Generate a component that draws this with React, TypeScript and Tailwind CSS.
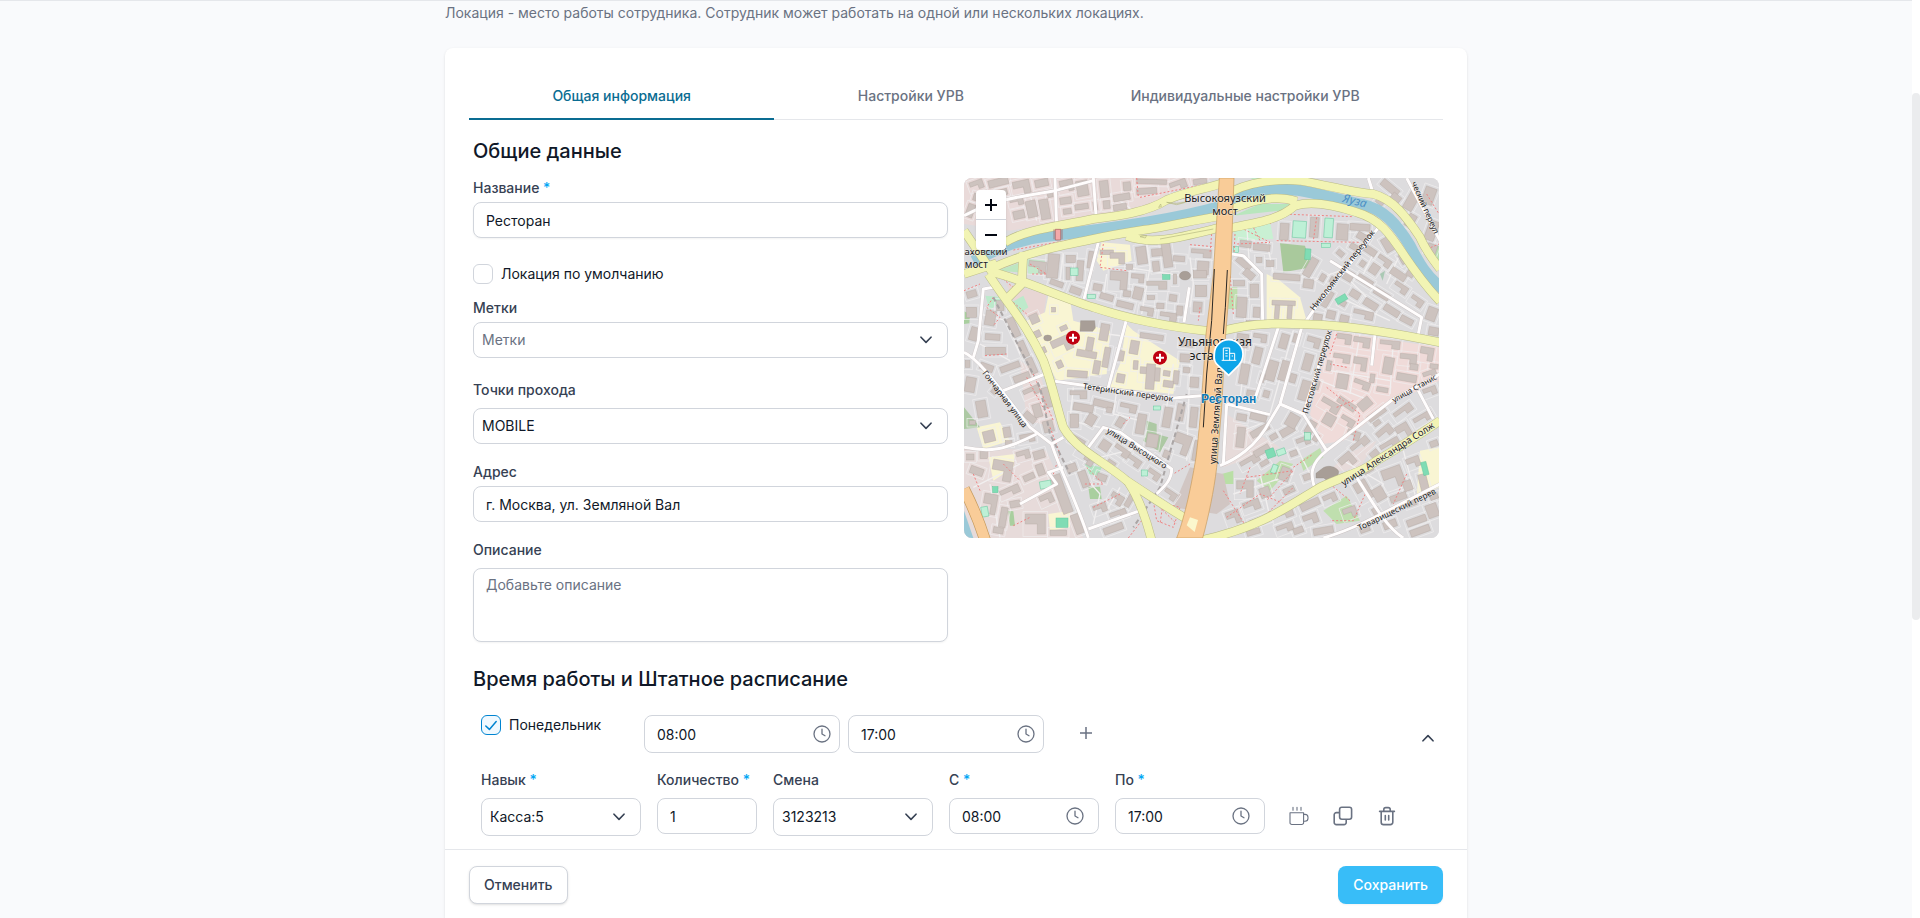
import React, { useState } from "react";
import clsx from "clsx";

const TABS = ["Общая информация", "Настройки УРВ", "Индивидуальные настройки УРВ"];

const FIELD =
  "block w-full rounded-lg border border-gray-300 bg-white text-sm placeholder:text-gray-500 outline-none focus:border-sky-500";

interface IconProps {
  className?: string;
}

function ChevronIcon({ className }: IconProps) {
  return (
    <svg viewBox="0 0 12 8" className={className} fill="none" stroke="currentColor" strokeWidth="1.6" strokeLinecap="round" strokeLinejoin="round">
      <path d="M1 1.2 6 6.4 11 1.2" />
    </svg>
  );
}

function ClockIcon({ className }: IconProps) {
  return (
    <svg viewBox="0 0 18 18" className={className} fill="none" stroke="currentColor" strokeWidth="1.3" strokeLinecap="round" strokeLinejoin="round">
      <circle cx="9" cy="9" r="8" />
      <path d="M9 4.2V9l3 1.7" />
    </svg>
  );
}

function MugIcon({ className }: IconProps) {
  return (
    <svg viewBox="0 0 20 20" className={className} fill="none" stroke="currentColor" strokeWidth="1.1" strokeLinecap="round" strokeLinejoin="round">
      <path d="M1 6.8h13.6v9.9a1.8 1.8 0 0 1-1.8 1.8h-10A1.8 1.8 0 0 1 1 16.700z" />
      <path d="M14.600 8.400h1.400a3 3 0 0 1 3 3v.8a3 3 0 0 1-3 3h-1.400" />
      <path d="M4 1.300v3M8 1.300v3M12 1.300v3" />
    </svg>
  );
}

function CopyIcon({ className }: IconProps) {
  return (
    <svg viewBox="0 0 20 20" className={className} fill="none" stroke="currentColor" strokeWidth="1.6" strokeLinejoin="round">
      <rect x="6.600" y="1.200" width="12" height="12" rx="2.200" />
      <path d="M6.600 6.600H3.400a2.200 2.200 0 0 0-2.200 2.200v7.600a2.200 2.200 0 0 0 2.200 2.200h7.600a2.200 2.200 0 0 0 2.200-2.200V13.200" />
    </svg>
  );
}

function TrashIcon({ className }: IconProps) {
  return (
    <svg viewBox="0 0 20 20" className={className} fill="none" stroke="currentColor" strokeWidth="1.6" strokeLinecap="round" strokeLinejoin="round">
      <path d="M2.600 5.400h14.800M4.200 5.400v10.800a2.400 2.400 0 0 0 2.400 2.400h6.800a2.400 2.400 0 0 0 2.400-2.400V5.400" />
      <path d="M6.800 5.200V3.600a2 2 0 0 1 2-2h2.400a2 2 0 0 1 2 2v1.600M8.300 9.600v4.400M11.700 9.600v4.400" />
    </svg>
  );
}

interface LabelProps {
  htmlFor: string;
  text: string;
  required?: boolean;
}

function FieldLabel({ htmlFor, text, required }: LabelProps) {
  return (
    <label htmlFor={htmlFor} className="block text-sm font-medium text-gray-700">
      {text}
      {required && <span className="text-sky-500"> *</span>}
    </label>
  );
}

interface SelectProps {
  id: string;
  options: string[];
  muted?: boolean;
  className?: string;
}

function SelectField({ id, options, muted, className }: SelectProps) {
  return (
    <div className={clsx("relative", className)}>
      <select id={id} className={clsx(FIELD, "h-full appearance-none pl-2 pr-10", muted ? "text-gray-500" : "text-gray-900")}>
        {options.map((o) => (
          <option key={o}>{o}</option>
        ))}
      </select>
      <ChevronIcon className="pointer-events-none absolute right-4 top-1/2 h-2 w-3 -translate-y-1/2 text-gray-700" />
    </div>
  );
}

interface TimeProps {
  id: string;
  value: string;
  label?: string;
  className?: string;
  iconClass: string;
}

function TimeField({ id, value, label, className, iconClass }: TimeProps) {
  return (
    <div className={clsx("relative", className)}>
      <input id={id} aria-label={label} defaultValue={value} className={clsx(FIELD, "h-full pl-3 pr-10 text-gray-900")} />
      <ClockIcon className={clsx("pointer-events-none absolute top-1/2 size-[18px] -translate-y-1/2 text-gray-500", iconClass)} />
    </div>
  );
}

// x, y, width, height, rotation
const BUILDINGS: number[][] = [
  [30, 20, 40, 26, -20], [85, 14, 60, 22, -14], [160, 20, 50, 40, -12], [225, 16, 40, 22, -12], [300, 18, 40, 34, -12],
  [350, 20, 34, 46, -10], [200, 80, 30, 50, -12], [150, 70, 40, 24, -12], [160, 110, 34, 24, -12], [240, 76, 28, 60, -10],
  [300, 70, 34, 20, -8], [345, 90, 40, 16, -8], [310, 104, 24, 16, -8], [420, 20, 26, 50, -6], [430, 80, 20, 24, -6],
  [460, 60, 50, 20, -10], [530, 16, 90, 14, 2], [530, 42, 60, 18, -4], [630, 20, 50, 26, -20], [460, 90, 40, 18, -10],
  [20, 90, 22, 40, 20], [40, 60, 30, 22, 16], [262, 240, 34, 72, 6], [206, 262, 52, 34, 6], [420, 228, 40, 14, 0],
  [450, 236, 44, 34, 0], [318, 244, 28, 22, 0], [350, 260, 20, 60, 4], [530, 218, 30, 52, -8], [575, 224, 40, 22, -4],
  [608, 206, 26, 74, -8], [694, 226, 60, 24, 4], [712, 262, 34, 40, 4], [450, 292, 52, 54, 4], [514, 300, 38, 26, 4],
  [520, 340, 28, 36, 14], [560, 322, 60, 24, 0], [562, 365, 22, 12, 0], [628, 362, 22, 20, 8], [640, 300, 10, 30, 0],
  [700, 290, 40, 22, 0], [706, 334, 34, 34, 0], [700, 384, 26, 30, 4], [400, 330, 26, 20, 10], [420, 360, 40, 18, 16],
  [470, 384, 50, 18, 14], [540, 400, 40, 24, 10], [600, 416, 50, 24, 8], [270, 320, 40, 16, 20], [330, 340, 34, 20, 20],
  [210, 420, 26, 28, -24], [222, 470, 20, 20, -24], [276, 490, 60, 44, -24], [380, 490, 20, 40, 10], [275, 400, 12, 14, 0],
  [420, 450, 26, 50, 10], [430, 520, 18, 60, 10], [350, 530, 60, 20, 10], [322, 590, 60, 20, 4], [400, 560, 20, 40, 10],
  [510, 500, 26, 40, 10], [540, 580, 60, 40, 4], [558, 570, 26, 76, 4], [470, 600, 24, 26, 10], [640, 590, 16, 40, 6],
  [660, 500, 40, 18, 6], [540, 480, 70, 16, 8], [610, 620, 30, 20, 8], [660, 540, 30, 24, 4], [20, 350, 30, 20, -16],
  [76, 410, 30, 44, 10], [20, 400, 30, 30, 0], [110, 380, 22, 30, 0], [30, 460, 26, 40, 16], [76, 480, 44, 18, 4],
  [76, 520, 60, 22, 0], [150, 430, 22, 60, -24], [180, 500, 20, 50, -24], [205, 550, 20, 50, -24], [60, 570, 40, 20, 20],
  [16, 610, 30, 44, 10], [50, 680, 30, 50, -10], [120, 570, 60, 18, -20], [160, 600, 50, 20, -20], [190, 640, 50, 24, -24],
  [220, 690, 24, 40, -16], [250, 640, 24, 60, -14], [190, 720, 40, 20, 40], [70, 770, 34, 34, -14], [250, 740, 30, 34, -14],
  [96, 860, 60, 60, 10], [60, 830, 22, 24, 0], [180, 780, 44, 24, -10], [170, 830, 40, 26, -16], [220, 830, 34, 24, -16],
  [30, 880, 40, 22, 20], [120, 940, 60, 24, -24], [70, 960, 40, 60, 10], [196, 1020, 60, 60, 0], [120, 1000, 20, 60, 10],
  [150, 980, 30, 20, -10], [290, 900, 30, 120, -20], [240, 960, 40, 30, -24], [340, 1020, 24, 60, -20], [330, 790, 44, 24, 30],
  [350, 830, 46, 24, 30], [320, 870, 30, 24, -20], [360, 890, 24, 50, -20], [400, 990, 40, 26, -20], [410, 900, 30, 20, 20],
  [450, 960, 40, 30, 30], [330, 650, 50, 24, 0], [340, 690, 60, 22, 10], [330, 720, 26, 40, 0], [400, 680, 60, 20, 14],
  [380, 720, 26, 34, 30], [480, 690, 50, 24, 12], [470, 730, 22, 30, 30], [420, 800, 30, 30, 34], [460, 820, 50, 24, 34],
  [500, 850, 44, 24, 34], [560, 890, 40, 24, 34], [530, 720, 26, 60, 10], [610, 700, 24, 60, 10], [560, 780, 34, 40, 10],
  [650, 690, 22, 50, 10], [690, 700, 22, 60, 6], [640, 780, 50, 60, 20], [610, 950, 40, 24, 34],
  [450, 1010, 50, 24, -20], [430, 1054, 60, 20, -20], [840, 200, 34, 20, 8], [880, 210, 50, 20, 6], [826, 260, 50, 18, 40],
  [850, 290, 34, 22, 40], [870, 330, 26, 40, 0], [820, 320, 34, 16, 0], [830, 370, 30, 60, 4], [880, 400, 20, 30, 4],
  [960, 148, 26, 50, 4], [1050, 130, 26, 60, 4], [1130, 150, 34, 48, 4], [1170, 150, 60, 20, 4], [1190, 180, 40, 20, 30],
  [940, 300, 80, 18, 4], [1030, 316, 30, 26, 8], [936, 380, 70, 14, 2], [944, 394, 14, 40, 4], [982, 394, 14, 40, 4],
  [1060, 420, 26, 26, 10], [1100, 410, 26, 24, 14], [1140, 424, 26, 22, 14], [1090, 350, 22, 50, 30], [1040, 250, 24, 60, 30],
  [1150, 290, 30, 30, 30], [1190, 310, 50, 20, 32], [1240, 350, 50, 20, 32], [1170, 350, 30, 22, 32], [1210, 380, 44, 22, 32],
  [1270, 400, 50, 20, 32], [1320, 430, 40, 18, 28], [1180, 410, 60, 24, 12], [1210, 220, 40, 20, 34], [1250, 250, 44, 24, 34],
  [1230, 270, 26, 30, 34], [1290, 290, 50, 22, 34], [1300, 330, 44, 24, 34], [1350, 370, 40, 24, 34], [1270, 190, 26, 44, -30],
  [1400, 400, 30, 40, 20], [1406, 460, 30, 24, 10], [1260, 30, 60, 22, 40], [1290, 60, 30, 30, 40], [1340, 50, 30, 60, 30],
  [1340, 120, 24, 40, 30], [1390, 40, 34, 50, 20], [1400, 140, 30, 60, 20], [1250, 70, 24, 22, 40], [1400, 210, 30, 30, 20],
  [830, 480, 34, 40, 8], [880, 480, 40, 24, 8], [880, 520, 24, 50, 14], [840, 570, 26, 60, 10], [920, 560, 30, 60, 16],
  [960, 480, 24, 44, 16], [960, 560, 24, 60, 16], [1040, 490, 40, 30, 16], [1030, 540, 26, 50, 16], [1020, 620, 30, 60, 16],
  [1130, 480, 44, 30, 8], [1180, 490, 50, 30, 8], [1120, 540, 50, 26, 8], [1180, 550, 40, 40, 8], [1130, 600, 34, 44, 10],
  [1180, 620, 50, 24, 20], [1260, 500, 60, 24, 6], [1270, 550, 30, 50, 10], [1320, 540, 50, 30, 6], [1380, 520, 40, 40, 10],
  [1310, 600, 60, 22, 10], [1390, 590, 40, 24, -20], [1080, 680, 60, 30, 30], [1090, 720, 34, 34, 30], [1140, 730, 44, 24, 30],
  [1130, 680, 60, 20, 34], [1200, 670, 30, 40, 50], [1220, 710, 60, 20, -36], [1160, 770, 40, 26, 20], [830, 720, 30, 20, 10],
  [830, 760, 24, 60, 6], [870, 720, 50, 20, 14], [870, 760, 60, 20, -30], [840, 850, 60, 24, -30], [880, 820, 50, 20, -30],
  [960, 760, 44, 22, -30], [980, 720, 34, 40, 30], [1010, 790, 40, 24, -20], [1040, 740, 24, 40, 30], [830, 920, 50, 50, 0],
  [850, 980, 50, 30, -20], [800, 1010, 40, 40, -20], [870, 1030, 60, 20, -20], [900, 940, 30, 30, -20], [960, 880, 30, 40, 20],
  [1140, 840, 44, 40, -40], [1170, 800, 60, 24, -40], [1250, 760, 50, 30, -40], [1300, 700, 60, 24, -36], [1360, 720, 60, 24, -30],
  [1260, 800, 60, 24, -30], [1310, 750, 40, 40, -30], [1390, 640, 40, 24, -20], [1190, 920, 40, 60, -30], [1240, 940, 34, 40, -30],
  [1270, 880, 60, 60, -20], [1340, 850, 40, 30, -20], [1380, 900, 24, 60, -14], [1290, 960, 50, 20, -20], [1020, 980, 60, 22, -24],
  [1090, 960, 40, 26, -24], [940, 1010, 60, 24, -20], [950, 1050, 50, 24, -20], [1030, 1020, 44, 30, -20], [1060, 1060, 60, 20, -10],
  [1150, 1000, 40, 30, -20], [1270, 1040, 40, 22, -20], [1340, 1030, 60, 20, -20], [1350, 1060, 60, 20, -20], [1400, 990, 34, 40, -20],
  [112, 46, 30, 18, -14], [60, 104, 44, 18, -20], [262, 52, 16, 18, -12], [400, 84, 12, 24, -8], [490, 24, 22, 26, -6],
  [700, 14, 40, 16, -10], [660, 58, 40, 12, -10], [318, 280, 12, 36, 0], [384, 232, 14, 50, 8], [500, 272, 18, 14, 0],
  [578, 262, 20, 30, -6], [640, 246, 34, 16, 4], [650, 396, 18, 28, 4], [590, 388, 22, 16, 4], [490, 350, 22, 18, 8],
  [300, 455, 22, 14, -24], [240, 520, 18, 18, -24], [290, 560, 18, 22, -24], [470, 530, 22, 30, 10], [520, 560, 14, 26, 4],
  [610, 590, 20, 16, 8], [690, 610, 26, 30, 4], [670, 580, 20, 16, 6], [16, 560, 14, 20, 0], [96, 640, 16, 20, 40],
  [28, 740, 18, 12, 0], [130, 760, 22, 30, -10], [136, 800, 20, 14, 0], [230, 870, 22, 34, -20], [190, 900, 34, 18, -24],
  [20, 840, 22, 18, 0], [100, 1060, 30, 18, 10], [270, 1068, 50, 16, 0], [380, 860, 18, 16, 30], [500, 960, 16, 40, 30],
  [440, 860, 26, 18, 34], [440, 700, 16, 16, 10], [580, 850, 26, 16, 34], [610, 830, 20, 22, 20], [700, 800, 16, 60, 10],
  [860, 440, 30, 14, 0], [920, 260, 22, 18, 0], [890, 250, 16, 16, 0], [1080, 300, 16, 22, 30], [1110, 310, 18, 18, 30],
  [1140, 380, 18, 16, 30], [1130, 230, 22, 16, 40], [1170, 210, 22, 16, 30], [1200, 260, 16, 18, 34], [1340, 290, 22, 18, 34],
  [1320, 240, 16, 30, -30], [1420, 330, 16, 26, 0], [900, 600, 14, 24, 16], [860, 650, 34, 18, 10], [910, 650, 18, 20, 16],
  [1000, 480, 18, 26, 16], [990, 600, 18, 26, 16], [1060, 620, 18, 26, 16], [1100, 560, 14, 30, 10], [1230, 600, 14, 26, 8],
  [1250, 640, 34, 14, 10], [1350, 570, 24, 18, 8], [1410, 570, 24, 14, 8], [1060, 780, 16, 22, 30], [930, 780, 22, 16, -30],
  [900, 860, 26, 14, -30], [990, 830, 22, 16, -20], [1030, 900, 22, 18, -20], [970, 940, 34, 18, -24], [1000, 1060, 30, 18, -20],
  [860, 1066, 40, 16, -16], [1230, 830, 26, 18, -40], [1210, 880, 30, 16, -30], [1330, 920, 26, 30, -20], [1410, 800, 24, 18, -20],
  [1240, 1000, 20, 30, -30], [1200, 1060, 30, 14, -20], [1410, 960, 24, 16, -20], [1340, 980, 30, 16, -20], [1240, 740, 22, 14, -36],
];

// parks and yards: colour, points
const AREAS: string[][] = [
  ["#e9dad9", "12,12 760,12 620,60 560,110 400,130 150,170 12,150"],
  ["#e8d6d4", "140,330 260,360 250,430 200,430 160,380"],
  ["#f0dbd9", "1110,470 1437,520 1437,620 1290,690 1150,800 1090,810 1050,720"],
  ["#e8dad9", "180,560 240,600 290,760 200,740"],
  ["#e7dbda", "12,820 260,830 370,1092 12,1092"],
  ["#e7dbda", "800,720 860,760 960,820 790,880"],
  ["#e7dbda", "1100,900 1160,840 1250,800 1200,880"],
  ["#f9f5d3", "265,365 330,375 340,440 450,470 440,600 290,620 200,440 255,415"],
  ["#f9f5d3", "500,450 520,470 660,560 640,660 450,640 480,570"],
  ["#f9f5d3", "425,205 510,212 515,260 430,290 410,260"],
  ["#f9f5d3", "920,300 960,320 1020,370 1040,440 920,440"],
  ["#f9f5d3", "50,760 120,745 150,800 70,825"],
  ["#f9f5d3", "85,850 165,840 160,880 100,920"],
  ["#f9f5d3", "265,1020 330,1010 330,1060 270,1070"],
  ["#f9f5d3", "1380,830 1437,820 1437,940 1370,970"],
  ["#c9f0d3", "820,150 930,140 940,195 825,200"],
  ["#b8e6bd", "820,125 900,90 990,90 960,110"],
  ["#c0e8c4", "870,12 1010,12 1000,30 900,25"],
  ["#bdeacb", "76,365 130,370 90,410"],
  ["#bdeacb", "155,385 190,365 205,400 170,425"],
  ["#c5e9cc", "200,255 255,260 255,300 205,300"],
  ["#bfe6c0", "110,290 175,268 175,295"],
  ["#a9c99c", "960,208 1035,215 1055,280 970,295"],
  ["#adc9a4", "560,740 590,750 590,780 625,790 600,835 550,800 560,770"],
  ["#a9cf9f", "385,940 420,938 425,975 390,975"],
  ["#a9cf9f", "145,1010 160,1012 165,1055 150,1055"],
  ["#adc9a4", "12,700 60,760 12,765"],
  ["#a9cf9f", "12,412 30,420 28,448 12,450"],
  ["#bfdfae", "1090,1010 1160,965 1200,1040 1130,1050"],
  ["#bfdfae", "890,920 960,860 1000,870 930,950"],
  ["#bfdfae", "1020,860 1080,822 1090,850 1030,890"],
  ["#b9dfa6", "785,900 820,890 820,930 790,930"],
  ["#bfdfae", "805,340 832,340 832,405 805,405"],
  ["#b0e3c0", "375,870 425,880 415,905 385,900"],
  ["#b9e0b0", "1390,240 1437,215 1437,270"],
  ["#aac9b4", "1260,300 1275,290 1268,320"],
  ["#d1c6c3", "690,880 790,900 810,990 770,1020 640,1000"],
];

// sport grounds: colour, x, y, w, h, rotation
const PITCHES: (string | number)[][] = [
  ["#bdf0d6", 1000, 140, 40, 50, 4], ["#bdf0d6", 1095, 132, 26, 58, 4], ["#7fdcb4", 1036, 224, 17, 32, 4],
  ["#7fdcb4", 1125, 376, 34, 18, -30], ["#bdf0d6", 1085, 208, 26, 13, 0], ["#bdf0d6", 332, 282, 22, 22, 0],
  ["#7fdcb4", 608, 302, 22, 14, 0], ["#7fdcb4", 915, 830, 26, 26, -20], ["#bdf0d6", 948, 830, 26, 18, -20],
  ["#bdf0d6", 940, 870, 16, 26, 20], ["#7fdcb4", 288, 1032, 36, 28, 0], ["#7fdcb4", 98, 938, 16, 18, 0],
  ["#bdf0d6", 238, 924, 34, 22, -10], ["#bdf0d6", 62, 1000, 20, 30, -10], ["#bdf0d6", 820, 218, 15, 18, 0],
  ["#7fdcb4", 1382, 866, 16, 40, -14], ["#bdf0d6", 1034, 776, 18, 22, 0], ["#bdf0d6", 580, 696, 22, 12, 0],
  ["#bdf0d6", 545, 888, 18, 18, 0], ["#bdf0d6", 382, 362, 24, 12, 0],
];

const YELLOW_ROADS = [
  "M12 170 L100 300",
  "M12 300 L110 268",
  "M135 205 C200 165 290 158 400 135 C480 125 560 115 620 78 C680 52 740 45 790 26",
  "M800 62 C860 22 960 14 1020 20 C1100 34 1180 56 1240 60 C1300 75 1340 130 1380 190 C1400 235 1425 265 1440 285",
  "M90 285 C200 235 300 215 400 195 C480 178 540 170 600 160 C680 145 720 135 790 125",
  "M500 186 C580 215 660 190 790 158",
  "M810 108 C870 80 940 60 1010 82",
  "M810 162 C900 145 960 135 1005 95 C1060 78 1130 95 1190 115 C1260 135 1290 180 1330 240 C1370 300 1410 350 1440 382",
  "M100 295 C200 320 300 370 400 400 C520 440 640 460 750 472",
  "M790 470 C900 440 1000 450 1080 452 C1200 460 1320 480 1440 505",
  "M190 235 L185 330 L140 375",
  "M85 300 C150 400 200 450 250 560 C280 640 290 700 310 760 C350 830 430 860 500 920 C560 960 620 1000 680 1035",
  "M505 925 C535 970 560 1040 575 1100",
  "M720 1100 C900 1060 980 1000 1080 940 C1150 905 1200 900 1250 860 C1320 820 1380 780 1440 740",
];

const WHITE_ROADS = [
  "M12 125 C100 80 160 70 285 50 L400 20", "M285 12 L290 160", "M400 12 L408 125",
  "M415 205 L372 375", "M688 340 L672 445", "M500 435 L445 640",
  "M100 340 L70 345 L55 500 L40 550", "M12 535 C60 555 130 660 210 760 L275 810 L310 790",
  "M255 600 L130 650", "M285 622 L380 635 L640 672 L725 665",
  "M12 820 C90 835 130 830 230 780", "M275 810 C300 890 350 980 385 1092", "M180 990 L290 930 L265 895 L310 880",
  "M385 820 L430 760 L480 775 L635 885 C635 920 610 940 590 960", "M385 1065 L540 1010",
  "M815 240 L850 245 L905 300 L908 440", "M1260 155 L1060 410 L1025 460 L960 690 L930 740 C890 820 820 860 780 875",
  "M955 460 L880 690", "M800 690 L930 722", "M960 690 L1030 720 L1100 830", "M1110 470 L1030 720",
  "M1110 260 L1385 430 L1375 480", "M1245 480 L1235 575", "M1440 600 L1300 675 L1100 830 C1050 870 1050 900 1065 945",
  "M1375 650 L1420 735", "M1190 910 C1240 990 1280 1060 1330 1092", "M1090 1092 C1200 1060 1300 1000 1440 930",
  "M1225 12 L1240 60", "M1340 12 L1440 200", "M800 690 L790 870",
];

const LANES = [
  "M310 240 L300 320", "M560 210 L570 280 L545 420", "M690 250 L700 330 L690 400", "M440 300 L430 370", "M500 280 L700 310",
  "M60 420 L140 440 L180 540", "M60 510 L150 560", "M340 640 L330 740 L420 760", "M470 650 L460 720 L540 740", "M640 570 L620 700",
  "M690 570 L680 860", "M350 470 L440 480 L600 500", "M420 850 L540 820", "M330 860 L420 960 L400 1050", "M480 940 L440 1010",
  "M40 940 L180 870", "M90 930 L120 1090", "M860 500 L840 680", "M1000 470 L930 720", "M1200 480 L1170 660", "M1300 500 L1290 660",
  "M1110 590 L1290 620", "M1080 620 L1230 680", "M820 780 L900 750", "M820 960 L1000 900", "M900 900 L930 1030", "M1010 820 L1050 900",
  "M1150 860 L1270 930 L1250 960", "M1330 830 L1370 980", "M1060 320 L1140 290 L1220 370", "M1160 380 L1290 440", "M920 200 L940 300",
  "M860 150 L870 300", "M1240 240 L1210 300", "M1320 240 L1280 330", "M1290 60 L1360 170", "M210 60 L230 140", "M450 60 L520 110",
];

const FOOTWAYS = [
  "M540 70 L740 30", "M300 150 L560 100", "M160 228 L430 180", "M430 210 L420 280 L500 290", "M690 212 L760 218",
  "M820 150 L930 205 L830 210", "M930 150 L960 120 L1180 128", "M950 200 L1200 205", "M1070 130 L1060 200", "M210 270 L260 300 L210 300",
  "M80 400 L120 430 L100 455", "M110 300 L160 340", "M160 385 L200 420", "M75 545 L140 540", "M12 350 L60 330 M100 370 L80 400",
  "M270 760 L300 840 L280 900", "M130 870 L180 920", "M40 900 L60 950", "M160 1055 L210 1030", "M380 880 L430 930 L370 930",
  "M490 750 L510 730", "M400 1000 L480 960", "M580 980 L660 1000 L640 1060 L590 1040 Z", "M690 870 L640 900",
  "M860 910 L1000 890 L920 980", "M800 1030 L900 960 L1000 1000", "M900 1040 L1000 940", "M1000 880 L1060 840", "M1100 640 L1200 720 L1180 800",
  "M1130 700 L1180 680", "M1160 580 L1110 570", "M1220 950 L1180 1040 L1110 1040", "M1110 930 L1170 980", "M1340 900 L1300 990",
  "M820 420 L810 300", "M1400 60 L1437 120", "M1390 230 L1437 210", "M720 400 L715 440", "M1130 480 L1110 540",
  "M530 12 L535 70", "M755 180 L750 240", "M825 180 L822 240", "M590 990 L650 1050", "M610 980 L600 1050", "M505 1092 L545 1040",
  "M200 610 L260 720", "M220 600 L280 740", "M870 140 L900 200", "M790 950 L860 1060", "M870 880 L840 960",
];

interface MapLabel {
  text: string;
  x: number;
  y: number;
  rotate?: number;
  size: number;
}

const MAP_LABELS: MapLabel[] = [
  { text: "Высокояузский", x: 795, y: 83, size: 33 },
  { text: "мост", x: 795, y: 122, size: 33 },
  { text: "аховский", x: 78, y: 244, size: 29 },
  { text: "мост", x: 49, y: 281, size: 30 },
  { text: "Ульяновская", x: 765, y: 516, size: 36 },
  { text: "эстакада", x: 765, y: 558, size: 36 },
  { text: "Николоямский переулок", x: 1154, y: 294, rotate: -52, size: 25 },
  { text: "Пестовский переулок", x: 1080, y: 596, rotate: -74, size: 25 },
  { text: "Тетеринский переулок", x: 503, y: 664, rotate: 8, size: 25 },
  { text: "Гончарная улица", x: 128, y: 680, rotate: 53, size: 25 },
  { text: "улица Высоцкого", x: 526, y: 830, rotate: 32, size: 25 },
  { text: "улица Земляной Вал", x: 778, y: 726, rotate: -86, size: 29 },
  { text: "улица Станис", x: 1367, y: 650, rotate: -29, size: 23 },
  { text: "улица Александра Солж", x: 1288, y: 848, rotate: -33, size: 28 },
  { text: "Товарищеский перев", x: 1314, y: 1014, rotate: -26, size: 25 },
  { text: "ческий переул", x: 1388, y: 104, rotate: 66, size: 24 },
];

function MapView() {
  return (
    <div className="relative h-[360px] overflow-hidden rounded-lg bg-[#dddcde]">
      <svg viewBox="12 12 1425 1080" preserveAspectRatio="xMidYMid slice" className="block h-full w-full" role="img" aria-label="Карта">
        <rect x="12" y="12" width="1425" height="1080" fill="#dddcde" />
        {AREAS.map(([fill, points]) => (
          <polygon key={points} points={points} fill={fill} />
        ))}
        <g fill="none" stroke="#f1efef" strokeWidth="4">
          {LANES.map((d) => <path key={d} d={d} />)}
        </g>
        <g stroke="#efedee" strokeWidth="2" fill="none">
          {BUILDINGS.map(([x, y, w, h, r]) => (
            <rect
              key={x + "-" + y}
              x={x - 7}
              y={y - 7}
              width={w + 14}
              height={h + 14}
              transform={`rotate(${r} ${x + w / 2} ${y + h / 2})`}
            />
          ))}
        </g>
        <g stroke="#b9aea8" strokeWidth="1.5" fill="#cdc3bf">
          {BUILDINGS.map(([x, y, w, h, r]) => (
            <g key={x + "-" + y} transform={`rotate(${r} ${x + w / 2} ${y + h / 2})`}>
              {w > 36 && h > 22 ? (
                <path d={`M${x} ${y}h${w}v${h}h${-w * 0.4}v${-h * 0.5}h${-w * 0.6}z`} />
              ) : (
                <rect x={x} y={y} width={w} height={h} />
              )}
            </g>
          ))}
        </g>
        {PITCHES.map(([fill, x, y, w, h, r]) => (
          <rect
            key={x + "-" + y}
            x={x}
            y={y}
            width={w}
            height={h}
            fill={String(fill)}
            stroke="#62c79c"
            strokeWidth="1.5"
            transform={`rotate(${r} ${x} ${y})`}
          />
        ))}
        <g fill="#a89e97" stroke="#8f857d">
          <ellipse cx="675" cy="305" rx="17" ry="13" />
          <ellipse cx="263" cy="492" rx="12" ry="9" />
          <path d="M1085 885 C1100 870 1130 878 1136 892 C1136 920 1100 925 1092 912 L1068 912 L1068 898Z" />
          <path d="M362 440h42l2 22-8 10h-38z" />
        </g>
        <g fill="none" stroke="#ef8383" strokeWidth="3" strokeDasharray="6 6">
          {FOOTWAYS.map((d) => <path key={d} d={d} />)}
        </g>
        <g fill="none" stroke="#aaa5a5" strokeWidth="6" strokeDasharray="14 10">
          <path d="M100 370 L240 640 L270 780 L330 900" />
          <path d="M680 660 L600 940 L520 1060" />
        </g>

        {/* the Yauza and its embankments */}
        <path
          d="M40 262 C120 220 180 195 250 188 C400 170 480 158 560 145 C650 130 720 115 790 95 C860 50 950 42 1010 48 C1080 58 1150 82 1210 92 C1270 105 1310 150 1350 215 C1375 265 1400 310 1450 345"
          fill="none"
          stroke="#9ac9d8"
          strokeWidth="34"
        />
        <path d="M12 1010 L40 1092 L12 1092Z" fill="#9ac9d8" />

        <g fill="none" stroke="#c9c2c2" strokeWidth="11" strokeLinejoin="round">
          {WHITE_ROADS.map((d) => <path key={d} d={d} />)}
        </g>
        <g fill="none" stroke="#fffdfd" strokeWidth="9" strokeLinejoin="round">
          {WHITE_ROADS.map((d) => <path key={d} d={d} />)}
        </g>
        <g fill="none" stroke="#b9bb88" strokeWidth="27" strokeLinejoin="round">
          {YELLOW_ROADS.map((d) => <path key={d} d={d} />)}
        </g>
        <g fill="none" stroke="#f2f4b4" strokeWidth="24" strokeLinejoin="round">
          {YELLOW_ROADS.map((d) => <path key={d} d={d} />)}
        </g>
        <g fill="none" stroke="#b4b67e" strokeWidth="2">
          <path d="M600 195 L760 165 M620 85 L650 88 L680 84 L650 92Z M540 188 l20 -4 l-4 8z M596 100 l6 -10 l2 8z" />
        </g>

        <path
          d="M778 12 L822 12 L812 300 L797 480 L785 700 L770 880 C762 950 745 1030 728 1092 L650 1092 C670 1040 690 960 708 850 C722 740 730 600 738 480 L760 300Z"
          fill="#f9cc98"
          stroke="#c59a5c"
          strokeWidth="2"
        />
        <path d="M12 945 C40 1000 60 1050 75 1098" fill="none" stroke="#c59a5c" strokeWidth="35" />
        <path d="M12 945 C40 1000 60 1050 75 1098" fill="none" stroke="#f9cc98" strokeWidth="31" />
        <path d="M763 285 L755 440 L740 600 L730 760 M802 288 L796 400 L790 480" fill="none" stroke="#2a2724" strokeWidth="3" />
        <path d="M690 1030 L714 1038 L704 1074 L680 1054Z" fill="#fbf7cd" />
        <path d="M286 166h16v32h-16zM306 166v30M282 166v30" fill="#f3a9a9" stroke="#a45a5a" strokeWidth="2" />

        {/* hospitals */}
        {[[339, 491], [600, 551]].map(([x, y]) => (
          <g key={x}>
            <circle cx={x} cy={y} r="21" fill="#bf0010" />
            <path d={`M${x - 12} ${y}h24M${x} ${y - 12}v24`} stroke="#fff" strokeWidth="6" />
          </g>
        ))}

        <text x="1184" y="92" transform="rotate(14 1184 82)" textAnchor="middle" fontSize="35" fontStyle="italic" fill="#4c8fc4" className="font-['Noto_Sans',sans-serif]">
          Яуза
        </text>
        <g fill="#1c1c1c" stroke="#f3f0ee" strokeOpacity="0.6" strokeWidth="3" paintOrder="stroke" textAnchor="middle" className="font-['Noto_Sans',sans-serif]">
          {MAP_LABELS.map((l) => (
            <text key={l.text + l.x} x={l.x} y={l.y} fontSize={l.size} transform={`rotate(${l.rotate ?? 0} ${l.x} ${l.y})`}>
              {l.text}
            </text>
          ))}
        </g>

        {/* location marker */}
        <path
          d="M806 604 L774 574 C757 560 764 545 763 540 A43 43 0 0 1 849 540 C849 552 845 564 836 574Z"
          fill="#0ea5e9"
          stroke="#fff"
          strokeWidth="5"
        />
        <g fill="none" stroke="#fff" strokeWidth="3">
          <path d="M785 559h44M790 559v-37h19v37M809 538h15v21M815 546h4M796 530h7M796 538h7M796 546h7" />
        </g>
        <text
          x="806"
          y="687"
          textAnchor="middle"
          fontSize="36"
          fontWeight="700"
          fill="#0e7ab8"
          stroke="#fff"
          strokeOpacity="0.7"
          strokeWidth="3"
          paintOrder="stroke"
          className="font-['Liberation_Sans',sans-serif]"
        >
          Ресторан
        </text>
      </svg>
      <div className="absolute left-3 top-3 flex flex-col rounded-sm bg-white text-gray-950 shadow">
        <button type="button" aria-label="Приблизить" className="flex size-[30px] items-center justify-center border-b border-gray-300">
          <svg viewBox="0 0 12 12" className="size-3" stroke="currentColor" strokeWidth="2"><path d="M0 6h12M6 0v12" /></svg>
        </button>
        <button type="button" aria-label="Отдалить" className="flex size-[30px] items-center justify-center">
          <svg viewBox="0 0 12 12" className="size-3" stroke="currentColor" strokeWidth="2"><path d="M0 6h12" /></svg>
        </button>
      </div>
    </div>
  );
}

function Checkbox({ id, text, checked, onChange }: { id: string; text: string; checked: boolean; onChange: () => void }) {
  return (
    <label htmlFor={id} className="flex items-center gap-2 text-sm text-gray-900">
      <span className="relative flex size-5">
        <input
          id={id}
          type="checkbox"
          checked={checked}
          onChange={onChange}
          className="size-5 appearance-none rounded-md border border-gray-300 bg-white checked:border-sky-600 checked:bg-sky-50"
        />
        {checked && (
          <svg viewBox="0 0 20 20" className="pointer-events-none absolute inset-0 size-5 text-sky-600" fill="none" stroke="currentColor" strokeWidth="1.5" strokeLinecap="round" strokeLinejoin="round">
            <path d="M4.8 11 8.4 14.4 15.2 6.6" />
          </svg>
        )}
      </span>
      {text}
    </label>
  );
}

export default function App() {
  const [tab, setTab] = useState<string>(TABS[0]);
  const [isDefault, setIsDefault] = useState<boolean>(false);
  const [monday, setMonday] = useState<boolean>(true);

  return (
    <div className="flex min-h-screen bg-[#f9fafc] font-['Inter',sans-serif]">
      <main className="flex flex-1 flex-col border-t border-gray-200">
        <div className="mx-auto flex w-full max-w-[1022px] flex-1 flex-col">
          <p className="pt-0.5 text-sm leading-5 text-gray-500">
            Локация - место работы сотрудника. Сотрудник может работать на одной или нескольких локациях.
          </p>

          <form className="mt-[25px] flex flex-1 flex-col rounded-t-lg bg-white shadow" onSubmit={(e) => e.preventDefault()}>
            <div className="flex-1 px-6 pt-6">
              <div role="tablist" className="flex border-b border-gray-200">
                {TABS.map((t) => (
                  <button
                    key={t}
                    type="button"
                    role="tab"
                    aria-selected={t === tab}
                    onClick={() => setTab(t)}
                    className={clsx(
                      "-mb-px h-12 flex-auto border-b-2 pt-0.5 text-sm font-medium",
                      t === tab ? "border-[#0a6c92] text-[#0a6c92]" : "border-transparent text-gray-500",
                    )}
                  >
                    {t}
                  </button>
                ))}
              </div>

              <div className="px-1 pt-[17px]">
                <h2 className="text-xl leading-7 font-medium text-gray-900">Общие данные</h2>
                <div className="mt-[13px] grid grid-cols-2 gap-4">
                  <div>
                    <FieldLabel htmlFor="name" text="Название" required />
                    <input id="name" defaultValue="Ресторан" className={clsx(FIELD, "mt-1 h-9 px-3 text-gray-900 shadow-xs")} />
                    <div className="mt-[26px]">
                      <Checkbox id="default" text="Локация по умолчанию" checked={isDefault} onChange={() => setIsDefault(!isDefault)} />
                    </div>
                    <div className="mt-3.5">
                      <FieldLabel htmlFor="tags" text="Метки" />
                      <SelectField id="tags" options={["Метки"]} muted className="mt-1 h-9" />
                    </div>
                    <div className="mt-[22px]">
                      <FieldLabel htmlFor="points" text="Точки прохода" />
                      <SelectField id="points" options={["MOBILE"]} className="mt-2 h-9" />
                    </div>
                    <div className="mt-[18px]">
                      <FieldLabel htmlFor="address" text="Адрес" />
                      <input id="address" defaultValue="г. Москва, ул. Земляной Вал" className={clsx(FIELD, "mt-1 h-9 px-3 text-gray-900")} />
                    </div>
                    <div className="mt-[18px]">
                      <FieldLabel htmlFor="description" text="Описание" />
                      <textarea
                        id="description"
                        placeholder="Добавьте описание"
                        className={clsx(FIELD, "mt-2 h-[74px] resize-none px-3 py-1.5 text-gray-900 shadow-xs")}
                      />
                    </div>
                  </div>
                  <MapView />
                </div>

                <h2 className="mt-[23px] text-xl leading-7 font-medium text-gray-900">Время работы и Штатное расписание</h2>

                <div className="mt-[22px] px-2">
                  <div className="flex items-start">
                    <div className="w-[163px]">
                      <Checkbox id="monday" text="Понедельник" checked={monday} onChange={() => setMonday(!monday)} />
                    </div>
                    <TimeField id="day-from" label="Начало" value="08:00" className="h-[38px] w-[196px]" iconClass="right-[9px]" />
                    <TimeField id="day-to" label="Конец" value="17:00" className="ml-2 h-[38px] w-[196px]" iconClass="right-[9px]" />
                    <button type="button" aria-label="Добавить интервал" className="ml-8 flex h-9 w-5 items-center justify-center text-gray-500">
                      <svg viewBox="0 0 12 12" className="size-3" stroke="currentColor" strokeWidth="1.5"><path d="M0 6h12M6 0v12" /></svg>
                    </button>
                    <button type="button" aria-label="Свернуть" className="mt-2 -mr-3 ml-auto flex size-[30px] items-center justify-center text-gray-700">
                      <ChevronIcon className="h-2 w-3 rotate-180" />
                    </button>
                  </div>

                  <div className="mt-[17px] flex gap-4">
                    <div className="w-[160px]">
                      <FieldLabel htmlFor="skill" text="Навык" required />
                      <SelectField id="skill" options={["Касса:5"]} className="mt-2 h-[38px]" />
                    </div>
                    <div className="w-[100px]">
                      <FieldLabel htmlFor="count" text="Количество" required />
                      <input id="count" defaultValue="1" className={clsx(FIELD, "mt-2 h-9 px-3 text-gray-900")} />
                    </div>
                    <div className="w-[160px]">
                      <FieldLabel htmlFor="shift" text="Смена" />
                      <SelectField id="shift" options={["3123213"]} className="mt-2 h-[38px]" />
                    </div>
                    <div className="w-[150px]">
                      <FieldLabel htmlFor="from" text="С" required />
                      <TimeField id="from" value="08:00" className="mt-2 h-9" iconClass="right-[15px]" />
                    </div>
                    <div className="w-[150px]">
                      <FieldLabel htmlFor="to" text="По" required />
                      <TimeField id="to" value="17:00" className="mt-2 h-9" iconClass="right-[15px]" />
                    </div>
                    <div className="mt-7 ml-2 flex h-9 items-center gap-6 text-gray-500">
                      <button type="button" aria-label="Перерыв"><MugIcon className="size-5" /></button>
                      <button type="button" aria-label="Копировать"><CopyIcon className="size-5" /></button>
                      <button type="button" aria-label="Удалить"><TrashIcon className="size-5" /></button>
                    </div>
                  </div>
                </div>
              </div>
            </div>

            <div className="mt-3 flex justify-between border-t border-gray-200 px-6 pt-4 pb-3.5">
              <button type="button" className="h-[38px] rounded-lg border border-gray-300 bg-white px-3.5 text-sm font-medium text-gray-700 shadow-sm">
                Отменить
              </button>
              <button type="submit" className="h-[38px] rounded-lg bg-[#38bdf8] px-[15px] text-sm font-medium text-white shadow-xs">
                Сохранить
              </button>
            </div>
          </form>
        </div>
      </main>
      {/* scroll track */}
      <div className="w-2 bg-white pt-[93px]">
        <div className="h-[527px] rounded-full bg-[#ebecee]" />
      </div>
    </div>
  );
}
